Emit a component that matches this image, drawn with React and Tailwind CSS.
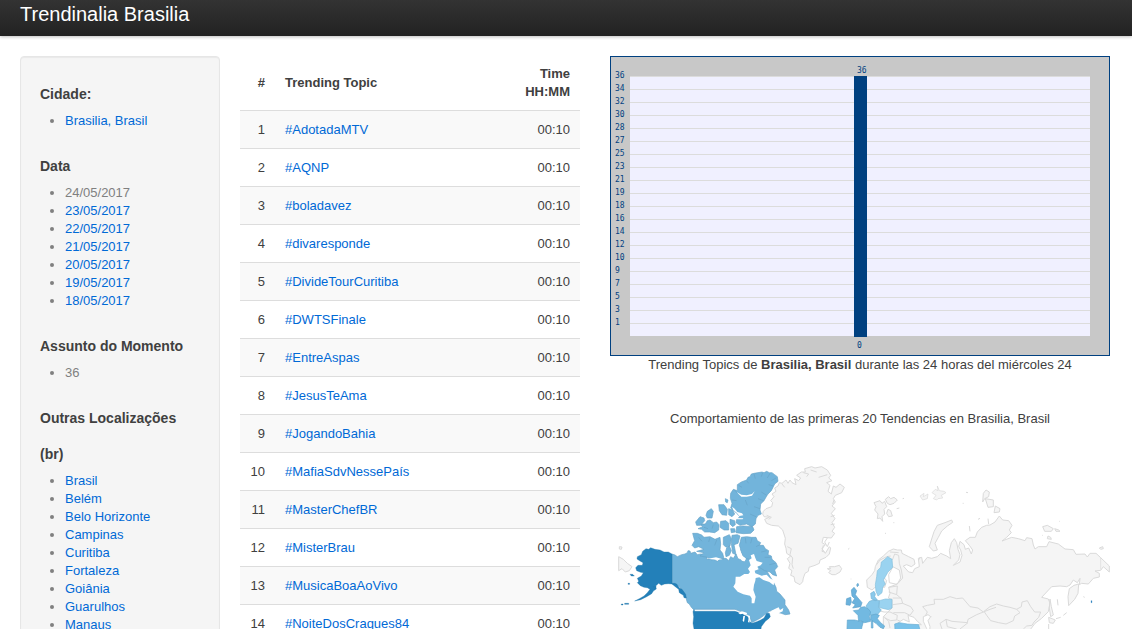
const dates = ['23/05/2017', '22/05/2017', '21/05/2017', '20/05/2017', '19/05/2017', '18/05/2017'];

const locations = [
  'Brasil', 'Belém', 'Belo Horizonte', 'Campinas', 'Curitiba',
  'Fortaleza', 'Goiânia', 'Guarulhos', 'Manaus'
];

const topics = [
  '#AdotadaMTV', '#AQNP', '#boladavez', '#divaresponde', '#DivideTourCuritiba',
  '#DWTSFinale', '#EntreAspas', '#JesusTeAma', '#JogandoBahia', '#MafiaSdvNessePaís',
  '#MasterChefBR', '#MisterBrau', '#MusicaBoaAoVivo', '#NoiteDosCraques84'
];

const axis = [36, 34, 32, 30, 28, 27, 25, 23, 21, 19, 18, 16, 14, 12, 10, 9, 7, 5, 3, 1];

function Heading({ children }) {
  return <h5 className="text-sm leading-9 font-bold text-[#404040]">{children}</h5>;
}

function List({ children }) {
  return <ul className="list-disc ml-[25px] mb-[18px] text-[#808080]">{children}</ul>;
}

function Link({ children }) {
  return <a href="#" className="text-[#0069d6] hover:underline">{children}</a>;
}

function Sidebar() {
  return (
    <aside className="w-[200px] shrink-0 p-[19px] bg-[#f5f5f5] border border-[#e6e6e6] rounded-sm shadow-[inset_0_1px_1px_rgba(0,0,0,0.05)]">
      <Heading>Cidade:</Heading>
      <List>
        <li><Link>Brasilia, Brasil</Link></li>
      </List>

      <Heading>Data</Heading>
      <List>
        <li>24/05/2017</li>
        {dates.map(d => (
          <li key={d}><Link>{d}</Link></li>
        ))}
      </List>

      <Heading>Assunto do Momento</Heading>
      <List>
        <li>36</li>
      </List>

      <Heading>Outras Localizações</Heading>
      <Heading>(br)</Heading>
      <List>
        {locations.map(l => (
          <li key={l}><Link>{l}</Link></li>
        ))}
      </List>
    </aside>
  );
}

function TopicsTable() {
  return (
    <table className="w-full border-separate border-spacing-0">
      <thead>
        <tr>
          <th className="w-[35px] p-[9px] pr-[10px] text-right">#</th>
          <th className="p-[9px] pl-[10px] text-left">Trending Topic</th>
          <th className="p-[9px] pr-[10px] text-right">Time<br />HH:MM</th>
        </tr>
      </thead>
      <tbody>
        {topics.map((topic, i) => (
          <tr key={topic} className="odd:bg-[#f9f9f9]">
            <td className="border-t border-[#ddd] pt-[10px] pb-[9px] pr-[10px] text-right">{i + 1}</td>
            <td className="border-t border-[#ddd] pt-[10px] pb-[9px] pl-[10px]"><Link>{topic}</Link></td>
            <td className="border-t border-[#ddd] pt-[10px] pb-[9px] pr-[10px] text-right">00:10</td>
          </tr>
        ))}
      </tbody>
    </table>
  );
}

function BarChart() {
  return (
    <svg viewBox="0 0 500 300" className="block w-full" role="img" aria-label="Trending Topics">
      <rect x="0.5" y="0.5" width="499" height="299" fill="#c8c8c8" stroke="#004080" />
      <rect x="20" y="20" width="460" height="260" fill="#f0f0ff" />
      {axis.map((n, i) => (
        <line key={n} x1="20" x2="480" y1={20.5 + i * 13} y2={20.5 + i * 13} stroke="#dcdcdc" />
      ))}
      <rect x="244" y="20" width="13" height="261" fill="#004080" />
      <g fill="#004080" fontSize="8" fontFamily="'DejaVu Sans Mono', monospace">
        {axis.map((n, i) => (
          <text key={n} x="5" y={22 + i * 13}>{n}</text>
        ))}
        <text x="247" y="17">36</text>
        <text x="247" y="292">0</text>
      </g>
    </svg>
  );
}

// three units to a pixel, every region has its own origin
function WorldMap() {
  return (
    <svg viewBox="30 -6 1500 600" className="block w-full" role="img" aria-label="Mapa" strokeLinejoin="round">
      {/* Canada */}
      <g fill="#72b4db" stroke="#66a3c7" strokeWidth="2">
        <path d="M216 312L225 315L232 320L245 314L255 312L262 308L264 302L270 303L272 310L285 306L292 314L302 312L310 313L322 318L320 328L332 326L345 330L352 334L360 328L378 325L386 332L392 320L400 325L408 312L414 326L424 330L432 336L440 320L450 315L480 318L504 340L500 362L520 396L528 412L530 424L540 432L555 450L555 464L566 480L570 492L556 494L544 490L530 486L520 480L508 484L500 490L480 505L455 518L450 500L430 487L405 478L280 478L274 472L268 462L262 458L258 444L252 432L246 420L238 410L226 402L216 402Z" />
        <path d="M486 66L492 68L500 64L508 68L516 68L524 74L532 80L534 94L524 102L520 110L514 122L504 132L500 138L492 152L482 162L480 180L484 192L474 196L468 206L466 222L456 230L440 222L420 226L408 218L410 208L420 200L410 190L402 182L392 174L396 160L391 145L392 130L400 118L412 122L412 104L424 96L440 90L444 82L450 80L454 72L462 70Z" />
        <path d="M410 230L430 228L458 230L462 240L452 250L430 251L408 248Z" />
        <path d="M278 250L292 250L305 255L312 262L330 260L345 268L360 262L362 282L360 300L368 310L372 326L350 326L335 330L322 322L300 318L312 308L290 304L312 298L296 290L284 294L276 286L284 272Z" />
        <path d="M370 262L388 254L394 266L390 288L378 292L370 284ZM396 256L412 254L420 258L414 280L402 284L408 314L398 310L394 280Z" />
        <path d="M424 262L440 260L455 262L468 262L472 272L482 278L478 286L490 286L496 296L506 302L504 314L514 318L516 328L528 338L533 350L524 360L530 378L518 374L510 366L494 362L478 352L460 330L440 326L428 318L422 300L418 286Z" />
        <path d="M330 210L340 218L350 216L357 224L356 240L344 248L328 246L314 246L305 238L294 236L308 230L300 222L316 222L322 212ZM362 214L378 212L386 220L386 240L372 240L360 232ZM390 208L404 212L406 224L398 230L390 222ZM392 236L404 236L406 246L394 248Z" />
        <path d="M300 200L312 204L314 212L302 226L290 226L287 216ZM322 184L334 176L340 184L336 204L322 204L318 196ZM356 164L372 164L382 178L380 196L366 194L358 182ZM386 176L398 180L404 192L396 200L386 194ZM376 146L384 150L382 158L377 156Z" />
        <path d="M380 294L388 288L394 302L388 316L378 320L376 308Z" />
        <path d="M416 106L426 112M440 92L446 100M462 72L466 86M488 68L484 80M510 70L502 84M528 84L514 92M520 108L506 104M500 136L484 126M490 152L474 146M480 176L462 170M468 200L450 192M404 120L412 130M396 150L410 152M436 150L442 166M436 264L438 280M456 264L452 280M480 284L468 290M500 302L484 306M512 322L494 322M526 340L508 344M296 262L306 274M330 262L326 276M350 270L344 286M312 232L324 236M340 224L336 236" fill="none" />
      </g>
      <g fill="#fff">
        {/* Hudson bay and the straits */}
        <path d="M407 380L420 380L433 372L445 372L450 366L444 356L452 346L447 330L455 325L452 316L462 312L466 324L470 333L488 338L482 346L472 350L476 358L464 362L466 370L485 377L500 374L510 385L523 392L521 406L508 396L490 390L478 382L467 384L466 392L462 405L460 420L467 440L463 460L455 460L455 445L450 437L430 433L413 425L400 410L406 400Z" />
        <path d="M412 288L418 290L420 302L428 318L438 326L434 334L426 332L416 318L410 304Z" />
        <path d="M410 126L424 134L440 136L456 132L464 124L456 137L440 140L424 140ZM396 170L404 176L412 186L426 190L430 196L418 198L410 188L400 180ZM400 204L430 205L428 208L402 208Z" />
        <path d="M514 482L526 476L536 472L540 480L550 474L548 484L536 490L524 496L516 492Z" />
        <path d="M324 326L348 322L368 328L350 329L332 328Z" />
      </g>

      {/* Estados Unidos */}
      <g fill="#2380b9" stroke="#1f73a6" strokeWidth="1">
        <path d="M216 312L205 306L192 306L180 300L165 298L152 293L146 298L138 296L128 304L124 314L112 320L111 327L120 333L129 338L127 346L114 346L107 353L110 362L122 367L130 368L124 378L112 385L116 394L112 398L121 407L132 412L142 413L150 418L142 428L132 438L118 446L104 453L122 449L140 440L155 431L160 423L169 417L167 408L176 400L184 406L194 402L205 401L216 402L226 410L236 418L238 428L250 436L252 443L259 444L257 433L246 418L238 414L230 402L224 400L216 400Z" />
        <path d="M90 373H98L103 378L94 378ZM84 400H89V403H84ZM64 462H69V465H64ZM74 460H86V463H74ZM160 410L168 408L166 416Z" />
        <path d="M282 478L284 484H405L415 487L428 486L430 494L445 500L448 514L456 520L470 515L482 510L492 504L500 490L508 490L511 500L506 506L496 514L490 522L484 530L480 560L286 560L279 520L281 500L279 485Z" />
        <path d="M1473 452H1476V458H1473Z" stroke="#5b9bd0" />
      </g>
      <path fill="#fff" d="M414 488L426 484L440 488L442 494L430 491L420 493ZM430 498L435 498L432 516L428 512ZM440 494L450 498L448 518L444 516L446 504Z" />

      <g fill="#f5f5f5" stroke="#dadada" strokeWidth="3">
        {/* Groenlandia, Islandia, Svalbard */}
        <g transform="translate(420 0)">
          <path d="M68 192L70 184L78 176L95 170L98 158L92 152L102 140L96 132L108 124L104 114L114 108L118 98L126 100L138 90L144 100L150 90L156 98L168 104L164 86L176 92L182 84L170 76L184 66L196 66L194 56L215 50L225 54L245 50L262 60L272 76L266 84L276 92L260 98L270 106L264 124L274 132L280 108L288 112L300 102L313 112L305 128L286 136L280 146L286 156L276 168L286 176L274 190L285 206L276 218L284 232L276 244L284 250L274 264L250 262L246 278L256 284L246 296L256 310L268 290L272 294L268 312L258 322L240 330L238 340L225 346L207 352L205 364L195 370L190 384L188 395L180 404L165 396L162 380L152 376L156 362L146 355L150 340L142 326L152 318L140 310L138 295L134 282L136 265L128 240L115 228L95 226L80 220L74 208L88 202L72 200Z" />
          <path d="M80 196L94 202L86 208M142 290L154 296L150 314L158 324L156 344L160 356M262 264L254 276L262 290L268 276M250 286L246 304L254 306M190 68L206 72L200 80M212 60L230 66M236 82L262 74M126 102L134 112M282 150L278 162M272 200L284 196M272 224L284 222" fill="none" />
          <path d="M262 356L272 356L268 350L284 350L298 346L305 356L300 366L286 374L276 374L266 368L272 362Z" />
          <path d="M402 158L414 154L420 152L426 160L434 154L440 170L432 178L434 192L426 200L428 214L420 204L412 206L414 192L404 180L408 170ZM436 148L446 140L452 146L462 142L472 150L462 160L450 164L442 160ZM444 178L452 182L457 198L446 200L440 190Z" />
          <path d="M470 176L478 174M488 146L492 145M460 218H463M435 250H438M324 298L328 295M332 387H334" />
        </g>

        {/* Europa y Rusia */}
        <g transform="translate(720 0)">
          <path d="M80 390L96 374L104 362L106 350L115 330L130 318L145 304L160 297L172 300L184 300L186 310L206 320L222 328L225 342L214 350L200 344L190 348L206 366L218 368L224 356L238 350L235 325L245 322L248 340L262 322L275 325L292 320L302 310L320 318L332 326L328 302L334 278L343 266L350 278L354 298L360 314L356 330L340 346L360 336L366 316L362 300L356 290L360 274L372 284L376 298L386 294L394 312L398 300L388 286L376 272L390 262L406 262L412 246L425 232L440 226L450 225L465 216L478 198L488 210L506 212L516 226L508 240L514 248L500 262L486 273L515 262L535 266L555 272L560 263L576 266L580 285L585 297L595 290L620 290L627 275L655 282L675 297L700 299L708 313L735 312L742 321L750 310L768 310L782 323L808 348L808 366L790 350L782 361L765 363L778 370L778 381L760 385L745 402L725 400L718 404L720 385L712 398L700 390L690 405L680 410L660 408L635 410L605 442L625 447L630 460L625 485L605 505L585 520L570 540L570 580L130 580L130 500L156 474L156 448L145 444L150 430L146 412L172 402L182 384L178 360L158 350L140 360L130 380L140 392L134 412L105 412L96 420L82 412Z" />
          <path d="M335 210L338 217L322 228L305 243L295 262L285 280L292 300L280 303L268 290L274 270L282 245L292 226L315 218Z" />
          <path d="M110 344L120 330L140 320L152 318M157 330L164 312L176 316L178 340L184 360L188 384L174 400M158 352L146 374L148 398L166 402L172 402M150 306L176 308M146 412L172 408L170 434L146 426M170 434L184 446L188 460L158 464M158 444L184 444M188 460L212 470L220 482L210 496L194 488L160 488M116 482L132 486L150 486L172 496L170 510L152 512L134 504M130 498L146 514L150 534M172 510L190 518L184 526M248 470L262 466L284 462L282 448L310 448L330 440L350 446L368 444L390 470L414 474L430 486L450 478L468 472M248 470L262 486L256 498L274 500M300 520L318 508L336 514L382 518L384 508L410 494L430 486M300 520L306 537M318 508L322 530L350 537M360 537L384 518" fill="none" />
          <path d="M450 470L470 462L490 468L510 472L530 478L540 488L524 498L520 512L498 522L476 518L452 512L440 496L432 484ZM530 478L544 470L546 456L562 452L572 470L584 486L602 486L596 502L582 516L576 526L560 528L550 537" fill="none" />
          <path d="M688 416L702 406L716 402L714 430L704 448L686 467L684 440Z" />
          <path d="M430 130L438 120L448 126L446 140L434 146L428 156ZM436 146L460 150L460 170L444 172ZM466 168L480 176L478 186L462 188ZM608 230L622 226L640 236L634 244L614 244ZM644 236L656 240L660 244L648 244ZM624 258L632 262L634 268L622 266ZM778 294L788 290L790 296L782 298Z" />
          <path d="M240 138L252 130L250 140L264 132L262 146L248 150ZM276 128L286 118L294 122L292 108L298 122L312 124L318 128L304 136L308 144L294 146L290 150L280 146L288 136Z" strokeWidth="2" />
          <path d="M378 127L384 128M368 160H371M388 228L390 244M414 208L420 205M444 206L446 222M652 448L654 466M730 440L734 442M648 506L662 502M670 496L680 488M240 322L236 330M658 214H660M606 256H608" />
          <path d="M630 447L634 470L640 495L632 500L628 474ZM626 502L646 510L640 520L628 518ZM626 522V560" />
          <path fill="#fff" d="M250 500L264 494L272 500L264 512L270 530L268 560L256 560L260 536L250 514Z" />
          <path fill="#fff" d="M172 520L190 508L208 516L204 496L222 502L232 514L244 524L170 526Z" />
        </g>
        <path d="M56 320L70 328L82 340L96 350L88 362L76 366L66 356L56 362ZM58 290L66 291L64 298L58 297Z" />
      </g>

      <g transform="translate(720 0)" strokeWidth="2">
        <path fill="#9ad3f0" stroke="#85bfdd" d="M143 320L156 328L158 352L144 366L136 380L130 390L136 402L128 412L126 428L114 438L108 424L106 404L110 380L112 362L122 352L124 336L132 330Z" />
        <path fill="#9ad3f0" stroke="#85bfdd" d="M118 452L136 447L156 448L156 474L146 479L132 476L116 472Z" />
        <path fill="#8ac9eb" stroke="#76b3d4" d="M92 430L102 424L106 432L104 440L112 450L106 452L94 446ZM88 454L100 450L118 452L116 472L124 480L112 494L90 494L84 480L78 468Z" />
        <path fill="#6bb2dd" stroke="#5ca0c9" d="M34 420L42 412L50 422L46 434L54 444L66 458L62 470L38 474L46 464L36 458L44 446L36 438ZM20 446L32 442L34 456L30 466L18 464ZM50 404L54 400L56 406L52 410Z" />
        <path fill="#72b9e1" stroke="#62a6cd" d="M40 482L56 480L62 472L74 470L86 478L92 486L88 500L92 514L74 518L62 512L56 514L54 496ZM22 510L44 510L70 516L66 530L60 560L20 560ZM92 496L108 492L118 496L112 506L122 518L134 528L130 536L120 532L108 520L92 510ZM94 514L98 512L99 534L94 534Z" />
        <path fill="#7ac2ea" stroke="#6aafd5" d="M164 522L178 518L202 522L236 524L240 540L236 560L166 560Z" />
      </g>
      <path d="M1502 323V358" stroke="#dadada" strokeWidth="2" />
    </svg>
  );
}

export default function App() {
  return (
    <div className="h-screen overflow-hidden bg-white text-[13px] leading-[18px] text-[#404040] font-['Liberation_Sans',Arial,sans-serif]">
      {/* Topbar */}
      <header className="h-9 px-5 pt-1 bg-linear-to-b from-[#333] to-[#222] shadow-[0_1px_3px_rgba(0,0,0,0.25)]">
        <h3 className="text-xl leading-5 text-white">
          <a href="#">Trendinalia Brasilia</a>
        </h3>
      </header>

      <div className="flex gap-5 pt-5 pl-5 pr-3">
        <Sidebar />

        <main className="flex flex-1 gap-5 items-start min-w-0">
          <div className="w-[340px] shrink-0">
            <TopicsTable />
          </div>

          {/* Charts */}
          <div className="flex-1 min-w-0 text-center">
            <div className="max-w-[500px] mx-auto">
              <BarChart />
            </div>
            <p>
              Trending Topics de <strong>Brasilia, Brasil</strong> durante las 24 horas del miércoles 24
            </p>
            <p className="mt-9 mb-5">Comportamiento de las primeras 20 Tendencias en Brasilia, Brasil</p>
            <div className="max-w-[500px] mx-auto">
              <WorldMap />
            </div>
          </div>
        </main>
      </div>
    </div>
  );
}
